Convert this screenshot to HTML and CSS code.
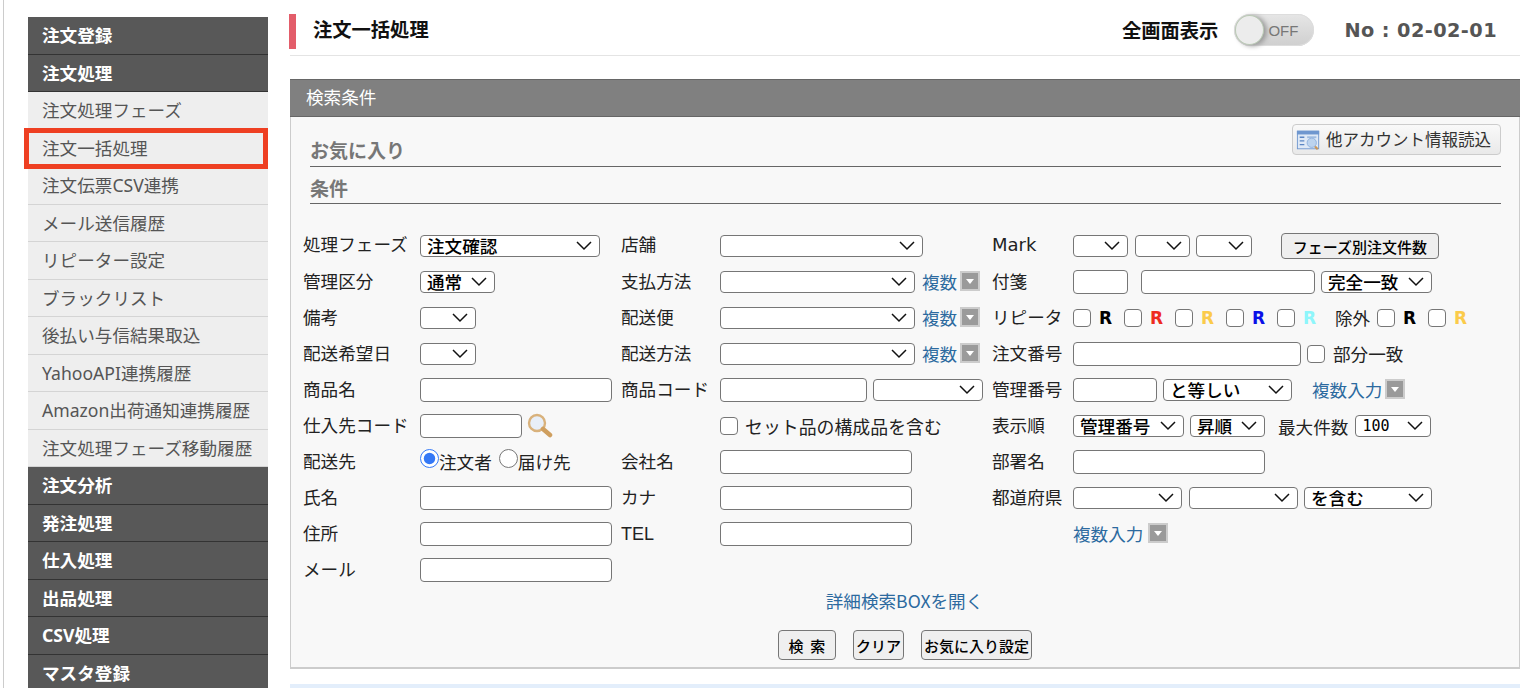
FILE: index.html
```html
<!DOCTYPE html>
<html lang="ja">
<head>
<meta charset="utf-8">
<title>注文一括処理</title>
<link rel="stylesheet" href="styles.css">
</head>
<body>
<div class="page">
  <nav class="side">
    <a class="head">注文登録</a>
    <a class="head">注文処理</a>
    <a class="sub">注文処理フェーズ</a>
    <a class="sub current">注文一括処理</a>
    <a class="sub">注文伝票CSV連携</a>
    <a class="sub">メール送信履歴</a>
    <a class="sub">リピーター設定</a>
    <a class="sub">ブラックリスト</a>
    <a class="sub">後払い与信結果取込</a>
    <a class="sub">YahooAPI連携履歴</a>
    <a class="sub">Amazon出荷通知連携履歴</a>
    <a class="sub">注文処理フェーズ移動履歴</a>
    <a class="head">注文分析</a>
    <a class="head">発注処理</a>
    <a class="head">仕入処理</a>
    <a class="head">出品処理</a>
    <a class="head">CSV処理</a>
    <a class="head">マスタ登録</a>
  </nav>
  <main class="main">
    <header class="title">
      <h1>注文一括処理</h1>
      <span class="full">全画面表示</span>
      <span class="toggle"><span class="knob"></span><span class="off">OFF</span></span>
      <span class="no">No : 02-02-01</span>
    </header>
    <section class="panel">
      <h2 class="panel-head">検索条件</h2>
      <div class="panel-body">
        <button class="other" type="button">
          <svg width="25" height="24" viewBox="0 0 27 24"><rect x="1.5" y="2.5" width="23" height="19" fill="#dfe9f6" stroke="#6f97cf"/><rect x="1" y="2" width="24" height="4" fill="#6f97cf"/><path d="M4 9h5M4 13h5M4 17h5" stroke="#5b86c4" stroke-width="1.5"/><rect x="12" y="8" width="10" height="2" fill="#9fbce0"/><circle cx="17" cy="15" r="5" fill="#bcd3ee" stroke="#8fb0dc"/><path d="M20.5 19l3 3" stroke="#c9965a" stroke-width="2.5"/></svg>
          <span class="other-text">他アカウント情報読込</span>
        </button>
        <h3 class="sec">お気に入り</h3>
        <h3 class="sec">条件</h3>
        <div class="form">
          <span class="lb">処理フェーズ</span>
          <div class="cell"><select class="w180"><option>注文確認</option></select></div>
          <span class="lb">店舗</span>
          <div class="cell"><select class="w203"><option></option></select></div>
          <span class="lb latin">Mark</span>
          <div class="cell"><select class="w55 m7"><option></option></select><select class="w55"><option></option></select><select class="w56"><option></option></select><button class="btn phase" type="button">フェーズ別注文件数</button></div>

          <span class="lb">管理区分</span>
          <div class="cell"><select class="w75"><option>通常</option></select></div>
          <span class="lb">支払方法</span>
          <div class="cell"><select class="w195"><option></option></select><a class="link l1">複数</a><i class="drop"></i></div>
          <span class="lb">付箋</span>
          <div class="cell"><input class="w55 m13" type="text"><input class="w174" type="text"><select class="w111"><option>完全一致</option></select></div>

          <span class="lb">備考</span>
          <div class="cell"><select class="w56"><option></option></select></div>
          <span class="lb">配送便</span>
          <div class="cell"><select class="w195"><option></option></select><a class="link l1">複数</a><i class="drop"></i></div>
          <span class="lb">リピータ</span>
          <div class="cell">
            <input type="checkbox"><b class="r k">R</b><input type="checkbox"><b class="r red">R</b><input type="checkbox"><b class="r yel">R</b><input type="checkbox"><b class="r blu">R</b><input type="checkbox"><b class="r cya">R</b>
            <span class="ex">除外</span><input type="checkbox"><b class="r k">R</b><input type="checkbox"><b class="r yel">R</b>
          </div>

          <span class="lb">配送希望日</span>
          <div class="cell"><select class="w56"><option></option></select></div>
          <span class="lb">配送方法</span>
          <div class="cell"><select class="w195"><option></option></select><a class="link l1">複数</a><i class="drop"></i></div>
          <span class="lb">注文番号</span>
          <div class="cell"><input class="w228" type="text"><input class="cb1" type="checkbox"><span class="part">部分一致</span></div>

          <span class="lb">商品名</span>
          <div class="cell"><input class="w192" type="text"></div>
          <span class="lb">商品コード</span>
          <div class="cell"><input class="w147" type="text"><select class="w110"><option></option></select></div>
          <span class="lb">管理番号</span>
          <div class="cell"><input class="w84" type="text"><select class="w129"><option>と等しい</option></select><a class="link l14">複数入力</a><i class="drop"></i></div>

          <span class="lb">仕入先コード</span>
          <div class="cell"><input class="w102" type="text">
            <svg class="glass" width="26" height="26" viewBox="0 0 26 26"><circle cx="10" cy="10" r="8" fill="#e8eff8" stroke="#d9b27c" stroke-width="2.4"/><path d="M16 16l7 6" stroke="#cf9f5f" stroke-width="4.5" stroke-linecap="round"/></svg>
          </div>
          <span class="lb"></span>
          <div class="cell"><input class="cb1" type="checkbox"><span class="set">セット品の構成品を含む</span></div>
          <span class="lb">表示順</span>
          <div class="cell"><select class="w111"><option>管理番号</option></select><select class="w75"><option>昇順</option></select><span class="max">最大件数</span><select class="w76 mono"><option>100</option></select></div>

          <span class="lb">配送先</span>
          <div class="cell radios"><input type="radio" name="to" checked><span>注文者</span><input type="radio" name="to"><span>届け先</span></div>
          <span class="lb">会社名</span>
          <div class="cell"><input class="w192" type="text"></div>
          <span class="lb">部署名</span>
          <div class="cell"><input class="w192" type="text"></div>

          <span class="lb">氏名</span>
          <div class="cell"><input class="w192" type="text"></div>
          <span class="lb">カナ</span>
          <div class="cell"><input class="w192" type="text"></div>
          <span class="lb">都道府県</span>
          <div class="cell"><select class="w109 m7"><option></option></select><select class="w109"><option></option></select><select class="w128"><option>を含む</option></select></div>

          <span class="lb">住所</span>
          <div class="cell"><input class="w192" type="text"></div>
          <span class="lb tel">TEL</span>
          <div class="cell"><input class="w192" type="text"></div>
          <span class="lb"></span>
          <div class="cell"><a class="link">複数入力</a><i class="drop d6"></i></div>

          <span class="lb">メール</span>
          <div class="cell"><input class="w192" type="text"></div>
        </div>
        <p class="more"><a class="link">詳細検索BOXを開く</a></p>
        <div class="actions">
          <button class="btn w58" type="button">検&nbsp;&nbsp;索</button>
          <button class="btn w51" type="button">クリア</button>
          <button class="btn w111b" type="button">お気に入り設定</button>
        </div>
      </div>
    </section>
    <div class="band"></div>
  </main>
</div>
</body>
</html>
```
FILE: styles.css
```css
* { box-sizing: border-box; }
html, body { margin: 0; height: 688px; overflow: hidden; background: #fff; }
body { font-family: "Noto Sans", "Noto Sans CJK JP", sans-serif; color: #222; }
.page { display: flex; margin-left: 3px; padding: 0 0 0 24px; border-left: 1px solid #ccc; height: 688px; overflow: hidden; }

.side { width: 240px; flex: none; padding-top: 17px; }
.side a { display: block; height: 37.5px; line-height: 36px; padding-left: 14px; font-size: 17.6px; white-space: nowrap; }
.head { background: #585858; color: #fff; font-weight: 700; border-bottom: 1px solid #333; }
.sub { background: #eee; color: #555; border-bottom: 1px solid #d4d4d4; }
.current { position: relative; }
.current::after { content: ""; position: absolute; left: -4px; right: 0; top: -2px; bottom: -3px; border: 5px solid #ee3f22; }

.main { width: 1230px; margin-left: 22px; flex: none; }
.title { display: flex; align-items: center; height: 56px; border-bottom: 1px solid #e4e4e4; padding-top: 5px; position: relative; }
.title::before { content: ""; position: absolute; left: -1px; top: 14px; width: 7px; height: 35px; background: #e35d6a; }
h1 { margin: 0 0 0 23px; font-size: 19.3px; font-weight: 700; color: #111; flex: 1; line-height: 36px; }
.full { font-size: 19.3px; font-weight: 700; color: #111; margin-right: 16px; }
.toggle { display: flex; align-items: center; width: 80px; height: 32px; border-radius: 16px; background: linear-gradient(#e6e6e6, #cfcfcf); box-shadow: inset 0 0 0 1px #ddd; }
.knob { width: 29px; height: 30px; margin-left: 1px; border-radius: 50%; background: #ececec; border: 1px solid #b9c9b4; box-shadow: 3px 1px 5px #999; }
.off { font-family: "Liberation Sans", sans-serif; font-size: 15px; color: #777; margin-left: 4px; }
.no { font-family: "DejaVu Sans", sans-serif; font-weight: 700; font-size: 19.3px; color: #555; margin: 0 23px 0 30px; letter-spacing: .43px; white-space: nowrap; }

.panel { margin-top: 23px; height: 590px; border: 1px solid #ccc; border-top: 0; border-bottom-width: 2px; background: #f8f8f8; }
.panel-head { margin: 0 -1px; height: 38px; line-height: 34px; background: #808080; border-bottom: 1px solid #666; border-top: 1px solid #666; color: #fff; font-size: 17.6px; font-weight: 400; padding-left: 16px; }
.panel-body { padding: 12px 18px 0 12px; position: relative; }
.other { position: absolute; right: 18px; top: 7px; display: flex; align-items: center; gap: 5px; height: 31px; width: 209px; padding: 0 0 0 3px; border: 1px solid #ccc; border-radius: 4px; background: linear-gradient(#f9f9f9, #e9e9e9); font: 16.5px "Noto Sans CJK JP", sans-serif; color: #333; white-space: nowrap; }
.other-text { margin-top: -2px; }
.sec { margin: 0 0 0 7px; height: 37.5px; padding-top: 10px; line-height: 24px; font-size: 19px; font-weight: 700; color: #777; border-bottom: 1px solid #666; }

.form { margin-top: 23px; display: grid; grid-template-columns: 117px 201px 99px 272px 81px 428px; grid-template-rows: 37px; grid-auto-rows: 36px; font-size: 17.6px; }
.lb { display: flex; align-items: center; padding-bottom: 4px; white-space: nowrap; color: #222; font-family: "Noto Sans CJK JP", sans-serif; }
.cell { display: flex; align-items: center; white-space: nowrap; font-family: "Noto Sans CJK JP", sans-serif; }
.latin { font-family: "DejaVu Sans", sans-serif; font-size: 18px; padding-bottom: 2px; }
.tel { font-family: "Liberation Sans", sans-serif; font-size: 18px; padding-bottom: 0; }

select { appearance: none; height: 22px; border: 1px solid #767676; border-radius: 4px; padding: 0 0 0 6px; margin: 0 6px 0 0; font: 500 17.6px/20px "Noto Sans CJK JP", sans-serif; color: #000; background: #fff url("data:image/svg+xml,%3Csvg xmlns='http://www.w3.org/2000/svg' width='16' height='10'%3E%3Cpath d='M1 1l7 7 7-7' fill='none' stroke='%23111' stroke-width='1.5'/%3E%3C/svg%3E") no-repeat right 7px center; flex: none; }
select.mono { font: 500 15px/20px "DejaVu Sans Mono", monospace; }
input[type=text] { height: 24px; border: 1px solid #767676; border-radius: 4px; background: #fff; margin: 0 6px 0 0; padding: 0; flex: none; }
input[type=checkbox] { appearance: none; width: 18px; height: 18px; margin: 0; border: 1px solid #767676; border-radius: 4px; background: #fff; flex: none; }
input[type=radio] { width: 19px; height: 19px; margin: -7px 0 0; accent-color: #3478f6; flex: none; }

.w55 { width: 55px; } .w56 { width: 56px; } .w75 { width: 75px; } .w76 { width: 76px; } .w84 { width: 84px; } .w102 { width: 102px; }
.w109 { width: 109px; } .w110 { width: 110px; } .w111 { width: 111px; } .w129 { width: 129px; } .w128 { width: 128px; }
.w147 { width: 147px; } .w174 { width: 174px; } .w180 { width: 180px; } .w192 { width: 192px; } .w195 { width: 195px; } .w203 { width: 203px; } .w228 { width: 228px; }
input.m13 { margin-right: 13px; }
select.m7 { margin-right: 7px; }

.link { color: #2c6a9f; font-size: 17.6px; font-family: "Noto Sans CJK JP", sans-serif; padding-bottom: 2px; }
.l1 { margin-left: 1px; }
.l14 { margin-left: 14px; }
.drop { display: block; width: 20px; height: 20px; margin: -2px 0 0 3px; background: #9a9a9a; border: 2px solid #ccc; position: relative; flex: none; }
.drop::after { content: ""; position: absolute; left: 4px; top: 6px; border: 4px solid transparent; border-top: 5px solid #fff; border-bottom: 0; }
.drop.d6 { margin-left: 5px; }

.btn { height: 30px; border: 1px solid #767676; border-radius: 4px; background: #efefef; color: #000; font: 500 15px "Noto Sans CJK JP", sans-serif; padding: 0; white-space: nowrap; flex: none; }
.phase { width: 158px; height: 26px; margin-left: 23px; margin-top: 1px; }

.r { font-family: "DejaVu Sans", sans-serif; font-weight: 700; font-size: 17px; width: 33px; padding-left: 8px; }
.k { color: #000; } .red { color: #ee2c1f; } .yel { color: #fbcb4a; } .blu { color: #0a10e8; } .cya { color: #8ef6fb; }
.ex { margin: -2px 0 0 7px; width: 42px; }
.part { margin: -2px 0 0 8px; }
.cb1 { margin-left: 1px; }
.set { margin: -1px 0 0 7px; font-size: 17.9px; }
.glass { margin-left: -1px; }
.max { margin: 0 7px; }
.radios span { margin-top: -2px; }
.radios input:nth-of-type(2) { margin-left: 7px; }

.more { margin: 1px 0 0; padding-left: 5px; text-align: center; line-height: 24px; }
.actions { display: flex; justify-content: center; gap: 17px; margin-top: 16px; padding-left: 6px; }
.w58 { width: 58px; } .w51 { width: 51px; } .w111b { width: 111px; }

.band { height: 20px; margin-top: 15px; background: #e3eefb; }
```
